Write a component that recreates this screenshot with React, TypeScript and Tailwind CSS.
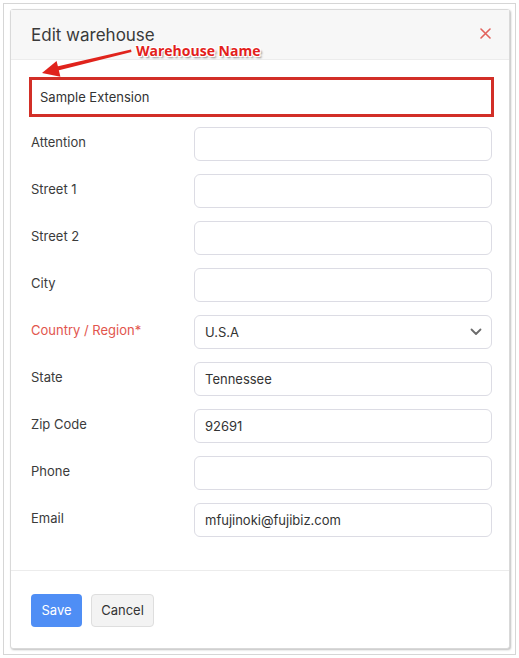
import React from 'react';

const rows: { label: string; value?: string; required?: boolean; select?: boolean }[] = [
  { label: 'Attention' },
  { label: 'Street 1' },
  { label: 'Street 2' },
  { label: 'City' },
  { label: 'Country / Region*', value: 'U.S.A', required: true, select: true },
  { label: 'State', value: 'Tennessee' },
  { label: 'Zip Code', value: '92691' },
  { label: 'Phone' },
  { label: 'Email', value: 'mfujinoki@fujibiz.com' },
];

export default function App() {
  return (
    <div className="relative w-[519px] h-[658px] bg-white p-[3px] font-['Inter','Liberation_Sans',sans-serif]">
      <div className="h-[652px] border border-[#d6d6d6] pl-[6px] pt-[5px]">
        {/* Modal */}
        <div className="w-[500px] h-[640px] flex flex-col border border-[#d9d9d9] rounded-[3px] shadow-[1px_1px_2px_rgba(0,0,0,0.25)] bg-white">
          {/* Header */}
          <div className="h-[50px] shrink-0 flex items-center justify-between pl-[20px] pr-[18px] bg-[#f7f7f7] border-b border-[#ececec]">
            <h2 className="text-[17px] text-[#3a3a3a] leading-none pt-[1px]">Edit warehouse</h2>
            <svg width="11" height="11" viewBox="0 0 11 11" className="mt-[-2px]">
              <path d="M1 1L10 10M10 1L1 10" stroke="#e2625c" strokeWidth="1.6" strokeLinecap="round" />
            </svg>
          </div>

          {/* Body */}
          <div className="flex-1 pl-[20px] pr-[17px] pt-[17px]">
            <div className="-ml-[2px] -mr-[2px] h-[40px] flex items-center border-[3px] border-[#d22f27] pl-[8px] pt-[2px] text-[13px] text-[#333]">
              Sample Extension
            </div>
            <div className="mt-[10px] flex flex-col gap-[13px]">
              {rows.map((r) => (
                <div key={r.label} className="flex items-center h-[34px]">
                  <label
                    className={`w-[163px] shrink-0 text-[13px] -mt-[2px] ${r.required ? 'text-[#e2554d]' : 'text-[#3b3b3b]'}`}
                  >
                    {r.label}
                  </label>
                  <div className="flex-1 h-[34px] flex items-center justify-between border border-[#dcdce4] rounded-[6px] pl-[10px] pr-[9px] text-[13px] text-[#333]">
                    <span className="pt-[2px]">{r.value}</span>
                    {r.select && (
                      <svg width="12" height="8" viewBox="0 0 12 8">
                        <path d="M1.5 1.5L6 6L10.5 1.5" fill="none" stroke="#6b6b6b" strokeWidth="1.8" strokeLinecap="round" strokeLinejoin="round" />
                      </svg>
                    )}
                  </div>
                </div>
              ))}
            </div>
          </div>

          {/* Footer */}
          <div className="h-[78px] shrink-0 border-t border-[#ececec] flex items-start gap-[9px] pl-[20px] pt-[23px]">
            <button className="w-[51px] h-[33px] rounded-[4px] bg-[#4f8ef5] text-white text-[13px]">Save</button>
            <button className="w-[63px] h-[33px] rounded-[4px] bg-[#f3f3f3] border border-[#dedede] text-[#333] text-[13px]">
              Cancel
            </button>
          </div>
        </div>
      </div>

      {/* Annotation overlay */}
      <svg className="absolute left-0 top-0 pointer-events-none" width="519" height="658">
        <polygon points="131,49.5 131.5,52 58,70.5 57,66.5" fill="#e0231c" />
        <polygon points="42,73 56.6,61.1 60.4,76.7" fill="#e0231c" />
      </svg>
      <div className="absolute left-[136px] top-[40px] text-[14px] font-bold font-['Open_Sans','Liberation_Sans',sans-serif] text-[#e3211b] [text-shadow:1px_1px_0_#fff,-1px_-1px_0_#fff,1px_-1px_0_#fff,-1px_1px_0_#fff,2px_2px_2px_rgba(0,0,0,0.45)]">
        Warehouse Name
      </div>
    </div>
  );
}
